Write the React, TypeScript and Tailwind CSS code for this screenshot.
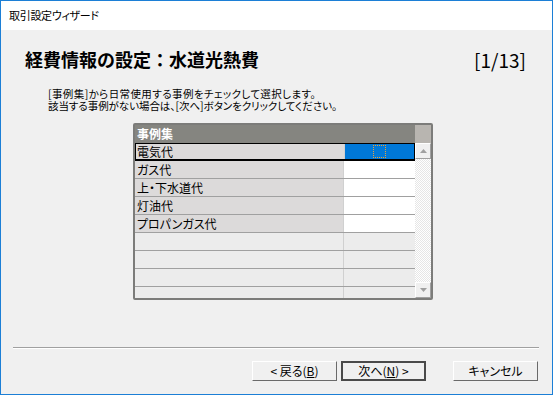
import React from 'react';

const jp = "font-['Noto_Sans_CJK_JP','Liberation_Sans',sans-serif] [font-feature-settings:'palt']";

const rows = ['電気代', 'ガス代', '上・下水道代', '灯油代', 'プロパンガス代'];

function Triangle({ up }: { up?: boolean }) {
  return (
    <svg width="7" height="4" viewBox="0 0 7 4">
      <path d={up ? 'M0 4 L3.5 0 L7 4 Z' : 'M0 0 L3.5 4 L7 0 Z'} fill="#a0a0a0" />
    </svg>
  );
}

function ScrollButton({ up }: { up?: boolean }) {
  return (
    <div className="h-[16px] flex items-center justify-center bg-[#f0f0f0] border-t border-l border-white border-r border-b border-r-[#a0a0a0] border-b-[#a0a0a0]">
      <Triangle up={up} />
    </div>
  );
}

function WizardButton({ children, primary }: { children: React.ReactNode; primary?: boolean }) {
  return (
    <div
      className={
        'w-[85px] h-[20px] flex items-center justify-center text-[12px] leading-none bg-[#f0f0f0] ' +
        (primary
          ? 'border-2 border-[#4a4a4a]'
          : 'border border-t-white border-l-white border-r-[#6a6a6a] border-b-[#6a6a6a]')
      }
    >
      {children}
    </div>
  );
}

export default function App() {
  return (
    <div className={`w-[553px] h-[395px] border border-[#1c7fd6] bg-[#f0f0f0] flex flex-col text-black ${jp}`}>
      {/* Title bar */}
      <div className="h-[29px] bg-white flex items-center pl-[8px] text-[11px] tracking-[-0.3px]">
        取引設定ウィザード
      </div>

      <div className="flex-1 flex flex-col">
        {/* Heading */}
        <div className="mt-[17px] pl-[24px] pr-[26px] flex justify-between items-center h-[24px]">
          <div className="text-[18px] font-bold leading-none [font-feature-settings:normal]">経費情報の設定：水道光熱費</div>
          <div className="text-[19px] leading-none">[1/13]</div>
        </div>

        {/* Description */}
        <div className="mt-[17px] pl-[47px] text-[10.5px] leading-[12px]">
          <div className="tracking-[0.4px]">[事例集]から日常使用する事例をチェックして選択します。</div>
          <div className="tracking-[-0.05px]">該当する事例がない場合は、[次へ]ボタンをクリックしてください。</div>
        </div>

        {/* Grid */}
        <div className="mt-[11px] ml-[132px] w-[300px] h-[177px] border-2 border-[#7c7c7a] rounded-[2px] flex bg-[#ececec] text-[12px]">
          <div className="w-[280px] flex flex-col overflow-hidden">
            <div className="h-[18px] bg-[#858580] text-white font-bold flex items-center pl-[2px]">事例集</div>
            {rows.map((name, i) => (
              <div
                key={name}
                className={
                  'h-[18px] flex shrink-0 ' +
                  (i === 0 ? 'border border-black border-b-2' : 'border-b border-[#a0a0a0]')
                }
              >
                <div className={'w-[209px] bg-[#dcdada] flex items-center border-r border-[#d0d0d0] ' + (i === 0 ? 'pl-[1px]' : 'pl-[2px]')}>
                  {name}
                </div>
                <div className={'flex-1 flex items-center justify-center ' + (i === 0 ? 'bg-[#0078d7]' : 'bg-white')}>
                  {i === 0 && <div className="w-[13px] h-[13px] border border-dotted border-[#f0a030]" />}
                </div>
              </div>
            ))}
            {[0, 1, 2, 3].map((k) => (
              <div key={k} className="h-[18px] shrink-0 flex border-b border-[#a0a0a0]">
                <div className="w-[209px] border-r border-[#d0d0d0]" />
                <div className="flex-1" />
              </div>
            ))}
          </div>

          {/* Scrollbar */}
          <div className="flex-1 flex flex-col">
            <div className="h-[18px] bg-[#b8b5b0]" />
            <ScrollButton up />
            <div className="flex-1 bg-[repeating-conic-gradient(#ffffff_0_25%,#e6e6e6_0_50%)] bg-[length:2px_2px]" />
            <ScrollButton />
          </div>
        </div>

        {/* Separator */}
        <div className="mt-[47px] ml-[12px] mr-[13px] border-t border-[#a0a0a0] border-b border-b-white" />

        {/* Buttons */}
        <div className="mt-[12px] flex justify-end pr-[14px]">
          <WizardButton>&lt; 戻る(<span className="underline">B</span>)</WizardButton>
          <div className="ml-[4px]">
            <WizardButton primary>次へ(<span className="underline">N</span>) &gt;</WizardButton>
          </div>
          <div className="ml-[27px]">
            <WizardButton>キャンセル</WizardButton>
          </div>
        </div>
      </div>
    </div>
  );
}
